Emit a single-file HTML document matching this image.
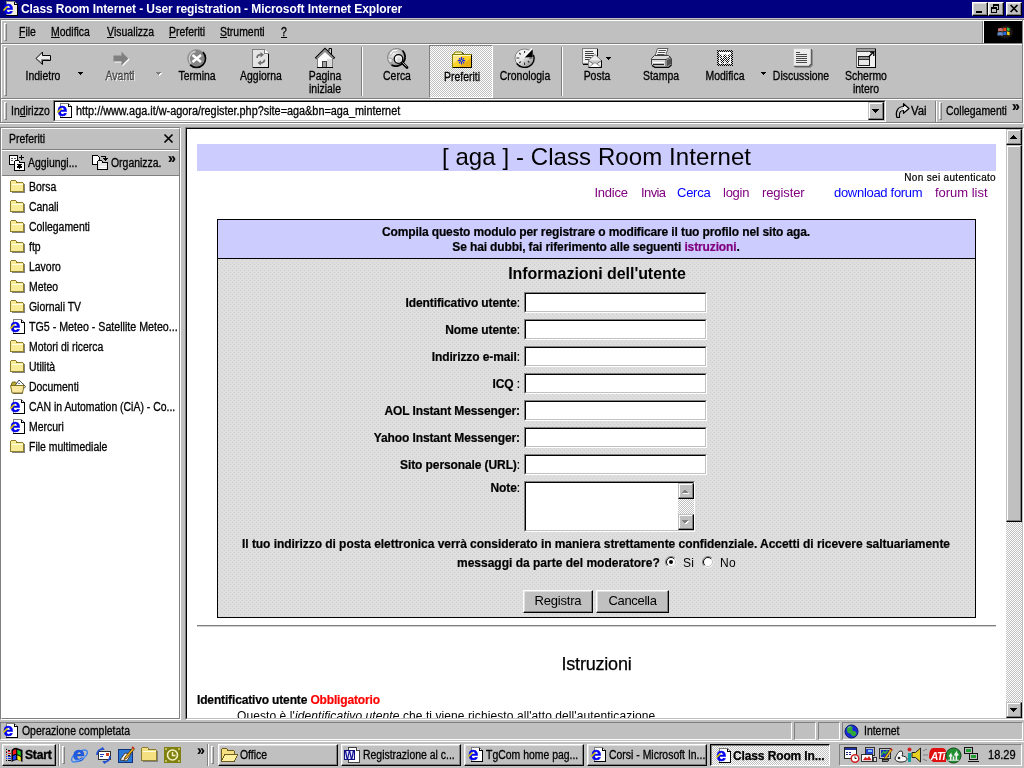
<!DOCTYPE html>
<html lang="it">
<head>
<meta charset="utf-8">
<title>Class Room Internet - User registration - Microsoft Internet Explorer</title>
<style>
*{box-sizing:border-box;margin:0;padding:0}
html,body{width:1024px;height:768px;overflow:hidden;background:#c0c0c0}
body{font-family:"Liberation Sans",sans-serif;font-size:12px;color:#000;position:relative;will-change:transform}
.abs{position:absolute}
svg{position:absolute;overflow:visible}
.px{shape-rendering:crispEdges}
/* UI text (MS Sans Serif look): 12px squeezed horizontally */
.u,.uc{-webkit-text-stroke:.3px #000}
.u{position:absolute;white-space:nowrap;font-size:12px;line-height:14px;transform:scaleX(.87);transform-origin:0 0}
.uc{position:absolute;white-space:nowrap;font-size:12px;line-height:13px;text-align:center;transform:translateX(-50%) scaleX(.87);transform-origin:50% 0}
.ub{position:absolute;white-space:nowrap;font-size:12px;line-height:14px;font-weight:bold;transform-origin:0 0}
u{text-decoration:none;position:relative}
u:after{content:"";position:absolute;left:0;right:0;top:12px;height:1px;background:#000}
.dis{color:#808080;text-shadow:1px 1px 0 #fff}
.hl{position:absolute;height:1px;left:0;width:1024px}
.grip{position:absolute;width:3px;border:1px solid;border-color:#fff #808080 #808080 #fff}
.vsep{position:absolute;width:2px;border-left:1px solid #808080;border-right:1px solid #fff}
.wb{position:absolute;top:2px;width:16px;height:14px;background:#c0c0c0;border:1px solid;border-color:#fff #000 #000 #fff;box-shadow:inset -1px -1px 0 #808080,inset 1px 1px 0 #dfdfdf}
.raised{background:#c0c0c0;border:1px solid;border-color:#fff #000 #000 #fff;box-shadow:inset -1px -1px 0 #808080,inset 1px 1px 0 #dfdfdf}
.sbtn{background:#c0c0c0;border:1px solid;border-color:#c0c0c0 #000 #000 #c0c0c0;box-shadow:inset -1px -1px 0 #808080,inset 1px 1px 0 #fff}
.sunk1{border:1px solid;border-color:#808080 #fff #fff #808080}
.dith{background-image:repeating-conic-gradient(#fff 0 25%,#c0c0c0 0 50%);background-size:2px 2px}
a{text-decoration:none}
.v{color:#800080}.l{color:#0000ff}
#page .p{position:absolute;white-space:nowrap}
#page .b{font-weight:bold;font-size:12px;line-height:14px;-webkit-text-stroke:.2px}
#page .lbl{position:absolute;white-space:nowrap;font-weight:bold;font-size:12px;line-height:14px;right:486px;letter-spacing:-.1px;-webkit-text-stroke:.2px}
#page .inp{position:absolute;left:337px;width:183px;height:21px;background:#fff;border:1px solid;border-color:#808080 #fff #fff #808080}
#page .inp:after{content:"";position:absolute;left:0;top:0;right:0;bottom:0;border:1px solid;border-color:#000 #c0c0c0 #c0c0c0 #000}
#page .nav{position:absolute;top:56px;font-size:13px;line-height:15px;white-space:nowrap;letter-spacing:-.25px}
#page .btn{position:absolute;top:461px;height:23px;background:#c0c0c0;border:1px solid;border-color:#fff #000 #000 #fff;box-shadow:inset -1px -1px 0 #808080,inset 1px 1px 0 #dfdfdf;font-size:13px;text-align:center;line-height:20px}
</style>
</head>
<body>
<!-- ===== TITLE BAR ===== -->
<div class="abs" style="left:0;top:0;width:1024px;height:18px;background:#000080"></div>
<svg style="left:2px;top:1px" width="16" height="16" viewBox="0 0 16 16"><path class="px" d="M4.500 .5h8l3 3v11h-11z" fill="#f4f0e0" stroke="#808080"/><path class="px" d="M12.500 .5v3h3M15.500 3.500v11h-11.500" fill="none" stroke="#000"/><text x="1.300" y="12.600" font-family="Liberation Sans,sans-serif" font-weight="bold" font-size="18" fill="#0000f0" stroke="#0000f0" stroke-width=".5">e</text><path d="M1.500 9.500l3.800-4" stroke="#d8c800" stroke-width="1.800" fill="none"/></svg>
<span class="ub" style="left:21px;top:2px;color:#fff;letter-spacing:-.09px">Class Room Internet - User registration - Microsoft Internet Explorer</span>
<div class="wb" style="left:972px"><svg class="px" style="left:3px;top:8px" width="6" height="2"><rect width="6" height="2" fill="#000"/></svg></div>
<div class="wb" style="left:988px"><svg class="px" style="left:2px;top:1px" width="8" height="9"><path d="M2 0h6v6h-2v-1h1v-3h-4v1h-1zM0 3h6v6h-6zM1 5v3h4v-3z" fill="#000" fill-rule="evenodd"/></svg></div>
<div class="wb" style="left:1006px"><svg style="left:3px;top:2px" width="8" height="7" viewBox="0 0 8 7"><path d="M.6 0l6.800 7M7.400 0l-6.800 7" stroke="#000" stroke-width="1.700" fill="none"/></svg></div>
<!-- ===== REBAR ===== -->
<div class="abs" style="left:0;top:19px;width:1px;height:104px;background:#808080"></div>
<div class="abs" style="left:1px;top:20px;width:1px;height:103px;background:#fff"></div>
<div class="abs" style="left:1022px;top:19px;width:1px;height:104px;background:#808080"></div>
<div class="abs" style="left:1023px;top:19px;width:1px;height:105px;background:#fff"></div>
<div class="hl" style="top:19px;background:#808080"></div><div class="hl" style="top:20px;left:1px;width:1021px;background:#fff"></div>
<!-- menu -->
<div class="grip" style="left:4px;top:23px;height:18px"></div>
<span class="u" style="left:19px;top:25px"><u>F</u>ile</span>
<span class="u" style="left:51px;top:25px"><u>M</u>odifica</span>
<span class="u" style="left:107px;top:25px"><u>V</u>isualizza</span>
<span class="u" style="left:169px;top:25px"><u>P</u>referiti</span>
<span class="u" style="left:220px;top:25px"><u>S</u>trumenti</span>
<span class="u" style="left:281px;top:25px"><u>?</u></span>
<div class="abs" style="left:982px;top:21px;width:1px;height:22px;background:#808080"></div><div class="abs" style="left:983px;top:21px;width:1px;height:22px;background:#fff"></div><div class="abs" style="left:984px;top:21px;width:38px;height:22px;background:#000"></div>
<svg style="left:994px;top:23px" width="20" height="18" viewBox="0 0 20 18"><defs><radialGradient id="gw" cx=".55" cy=".5" r=".5"><stop offset="0" stop-color="#406040" stop-opacity=".55"/><stop offset=".7" stop-color="#503838" stop-opacity=".35"/><stop offset="1" stop-color="#000" stop-opacity="0"/></radialGradient></defs><ellipse cx="10.500" cy="9" rx="9.500" ry="8" fill="url(#gw)"/><path d="M4 5.500q2.500-1 4.800 0v3q-2.300-1-4.800 0z" fill="#e88080" opacity=".85"/><path d="M3.500 9.500q2.700-1 5.300 0v3.200q-2.600-1-5.300 0z" fill="#70a0e8" opacity=".85"/><path d="M9.300 4.800h3v3.200h-3z" fill="#f04818"/><path d="M13 4.500q1.500 .2 2.600 .8v3q-1.100-.6-2.600-.8z" fill="#38c040"/><path d="M9.300 8.800h3v3.200h-3z" fill="#2868e0"/><path d="M13 8.500q1.500 .2 2.600 .8v3.200q-1.100-.6-2.600-.8z" fill="#f8d010"/></svg>
<div class="hl" style="top:43px;left:1px;width:1021px;background:#808080"></div><div class="hl" style="top:44px;left:1px;width:1021px;background:#fff"></div>
<!-- toolbar -->
<div class="grip" style="left:4px;top:47px;height:49px"></div>
<!-- back -->
<svg style="left:33px;top:49px" width="20" height="18" viewBox="0 0 20 18"><path d="M3 9.500l6.500-6.500v3.500h8v5h-8v4z" fill="#ececec" stroke="#000" stroke-linejoin="miter"/><path d="M5 10.500l3.500 3.500v-3.500h8" fill="none" stroke="#808080"/></svg>
<div class="uc" style="left:43px;top:70px">Indietro</div>
<svg class="px" style="left:78px;top:72px" width="5" height="3"><path d="M0 0h5l-2.500 3z" fill="#000"/></svg>
<!-- forward -->
<svg style="left:111px;top:50px" width="20" height="18" viewBox="0 0 20 18"><path d="M18.500 9.500l-7 7v-4h-8v-6h8v-4z" fill="#fff"/><path d="M17.500 8.500l-7 7v-4h-8v-6h8v-4z" fill="#808080"/></svg>
<div class="uc dis" style="left:120px;top:70px">Avanti</div>
<svg class="px" style="left:156px;top:72px" width="6" height="4"><path d="M1 1h5l-2.500 3z" fill="#fff"/><path d="M0 0h5l-2.500 3z" fill="#808080"/></svg>
<!-- stop -->
<svg style="left:187px;top:49px" width="20" height="20" viewBox="0 0 20 20"><circle cx="9.500" cy="9.500" r="9" fill="#858585" stroke="#9c9c9c"/><path d="M15.900 3.100a9 9 0 0 1-12.800 12.800" fill="none" stroke="#000" stroke-width="1.600"/><path d="M4.200 14.500a7.200 7.200 0 0 1 4.300-12" fill="none" stroke="#d4d4d4" stroke-width="1.300"/><path d="M5.500 6l8.500 7M14 6l-8.500 7" stroke="#fff" stroke-width="2.300"/></svg>
<div class="uc" style="left:197px;top:70px">Termina</div>
<!-- refresh -->
<svg style="left:251px;top:48px" width="20" height="22" viewBox="0 0 20 22"><path class="px" d="M1.500 1.500h12l4 4v14h-16z" fill="#e4e4e4" stroke="#808080"/><path class="px" d="M13.500 1.500v4h4" fill="#fff" stroke="#808080"/><path class="px" d="M17.500 5.500v14h-16" fill="none" stroke="#000"/><path d="M6 10c0-2.500 2-3.800 4.500-3.300" fill="none" stroke="#707070" stroke-width="1.700"/><path d="M9.500 4l3.500 2.800l-3.500 2.600z" fill="#707070"/><path d="M13.500 11.500c0 2.500-2 3.800-4.500 3.300" fill="none" stroke="#707070" stroke-width="1.700"/><path d="M10 12.200l-3.500 2.800l3.500 2.600z" fill="#707070"/></svg>
<div class="uc" style="left:261px;top:70px">Aggiorna</div>
<!-- home -->
<svg style="left:314px;top:47px" width="22" height="23" viewBox="0 0 22 23"><path d="M15 4v-2.500h2.500v6" fill="#d0d0d0" stroke="#000"/><path d="M3.500 11.500v9h15v-9l-7.500-7z" fill="#fafafa" stroke="#808080"/><path d="M13 12h5v8.500h-5z" fill="#d8d8d8"/><path d="M1.500 11.500l9.500-9.500l9.500 9.500" fill="none" stroke="#000" stroke-width="2.200"/><path d="M2.300 11.300l8.700-8.700l8.700 8.700" fill="none" stroke="#fff" stroke-width=".9"/><rect class="px" x="8.500" y="14.500" width="4" height="6" fill="#a0a0a0" stroke="#404040"/><path class="px" d="M3 20.500h16" stroke="#000"/></svg>
<div class="uc" style="left:325px;top:70px">Pagina<br>iniziale</div>
<div class="vsep" style="left:361px;top:47px;height:49px"></div>
<!-- search -->
<svg style="left:386px;top:47px" width="24" height="22" viewBox="0 0 24 22"><defs><radialGradient id="gg" cx=".3" cy=".25" r=".9"><stop offset="0" stop-color="#f4f4f4"/><stop offset=".55" stop-color="#b8b8b8"/><stop offset="1" stop-color="#707070"/></radialGradient></defs><circle cx="10.500" cy="10.500" r="9" fill="url(#gg)" stroke="#808080"/><path d="M16.500 3.500a9.200 9.200 0 0 1-11 14.500" fill="none" stroke="#000" stroke-width="1.700"/><path d="M3 7l4-4.500l6-.5l-2 2.500l-4 .5l-2 3.500z" fill="#fff" stroke="#909090" stroke-width=".6"/><path d="M1.500 10.500l5 1.500l-1 4l-2.500-1z" fill="#e8e8e8" stroke="#808080" stroke-width=".6"/><path d="M16 15.500l5 5" stroke="#000" stroke-width="2.800" stroke-linecap="round"/><path d="M16.500 15.500l4 4" stroke="#b0b0b0" stroke-width="1"/><circle cx="12.500" cy="12" r="4.300" fill="#f4f4f4" stroke="#000" stroke-width="1.300"/><circle cx="13.200" cy="12.800" r="2.500" fill="#d8d8d8"/></svg>
<div class="uc" style="left:397px;top:70px">Cerca</div>
<!-- favorites (pressed) -->
<div class="abs sunk1 dith" style="left:429px;top:45px;width:64px;height:53px"></div>
<svg style="left:452px;top:51px" width="20" height="17" viewBox="0 0 20 17"><path d="M1.500 3.500l1.500-2.500h6.500l1.500 2.500" fill="#fff4b0" stroke="#808000"/><path d="M10.500 1.500l1.200 2" stroke="#000"/><rect class="px" x=".5" y="3.500" width="19" height="13" fill="#ffd428" stroke="#808000"/><path d="M1 4h10l-10 9z" fill="#fff" opacity=".45"/><path d="M19 7v9h-12z" fill="#d89000" opacity=".55"/><path class="px" d="M19.500 3.500v13h-19" fill="none" stroke="#000"/><path class="px" d="M1 4.500h18" stroke="#fff8c0"/><path d="M9.500 6v7.500M5.800 9.700h7.400" stroke="#1020f0" stroke-width="1.200"/><path d="M7.500 7.700l.1 .1M11.500 7.700l.1 .1M7.500 11.700l.1 .1M11.500 11.700l.1 .1" stroke="#1020f0" stroke-width="1.500" stroke-linecap="round"/><path d="M8.300 8.500l2.400 2.400M10.700 8.500l-2.400 2.400" stroke="#1020f0" stroke-width="1"/><circle cx="9.500" cy="9.700" r=".8" fill="#f0e020"/></svg>
<div class="uc" style="left:462px;top:71px">Preferiti</div>
<!-- history -->
<svg style="left:514px;top:47px" width="23" height="22" viewBox="0 0 24 22" preserveAspectRatio="none"><defs><linearGradient id="gh" x1="0" y1="0" x2="1" y2="1"><stop offset="0" stop-color="#ffffff"/><stop offset=".45" stop-color="#e8e8e8"/><stop offset="1" stop-color="#808080"/></linearGradient></defs><ellipse cx="11" cy="11" rx="10" ry="9" fill="url(#gh)" stroke="#808080"/><path d="M20.300 8a10 9 0 0 1-17.500 8.500" fill="none" stroke="#000" stroke-width="1.400"/><path d="M11 4v2M5.500 6l1.500 1.500M2.500 11h3M5.500 16l1.500-1.500M11 18v-2.500M16 15.500l-1.500-1.500M19 11h-3" stroke="#303030" stroke-width="1.100"/><path d="M10.500 10.500l9-8.500v8z" fill="#000"/><path d="M10 10.500l9-9" stroke="#fff" stroke-width="1.700"/></svg>
<div class="uc" style="left:525px;top:70px">Cronologia</div>
<div class="vsep" style="left:561px;top:47px;height:49px"></div>
<!-- mail -->
<svg style="left:582px;top:48px" width="30" height="22" viewBox="0 0 30 22"><path class="px" d="M.5 .5h15v15h-15z" fill="#f0f0f0" stroke="#808080"/><path class="px" d="M15.500 .5v15.500h-15" fill="none" stroke="#000"/><path class="px" d="M3 3h8M3 5h9M3 7h9M3 9h6M3 11h4" stroke="#404040"/><path d="M6.500 12.500l6.500-6l6.500 6v7h-13z" fill="#ececec" stroke="#808080"/><path d="M6.500 12.500l6.500 4.500l6.500-4.500" fill="#c8c8c8" stroke="#707070"/><path d="M6.500 19.500l6.500-5l6.500 5" fill="#fff" stroke="#909090"/><path d="M19.500 12.500v7h-13" fill="none" stroke="#000"/><path class="px" d="M24 9h5l-2.500 3z" fill="#000"/></svg>
<div class="uc" style="left:597px;top:70px">Posta</div>
<!-- print -->
<svg style="left:650px;top:47px" width="24" height="22" viewBox="0 0 24 22"><path d="M7.500 1.500h10.500l-3 9h-10.500z" fill="#fff" stroke="#606060"/><path d="M8.500 3.500h7.500M7.800 5.500h7.500M7.100 7.500h7.500" stroke="#505050" stroke-width="1.100"/><path d="M1.500 11.500l3-3h14l3 3v6l-3 2.500h-14l-3-2.500z" fill="#dcdcdc" stroke="#404040"/><path d="M1.500 12.500h14.500l5-2.500M16 12.500v7" fill="none" stroke="#404040"/><path d="M17 13l4-2v6l-4 2.500z" fill="#505050"/><path d="M3 15.500h11" stroke="#fff"/><path d="M3 17.500h11" stroke="#202020" stroke-width="1.300"/><path d="M2 18.500l3 2h13.500l3-2.500" fill="none" stroke="#000" stroke-width="1.200"/></svg>
<div class="uc" style="left:661px;top:70px">Stampa</div>
<!-- edit (Word) -->
<svg style="left:717px;top:50px" width="16" height="16" viewBox="0 0 16 16"><defs><pattern id="ck" width="2" height="2" patternUnits="userSpaceOnUse"><rect class="px" x="0" y="0" width="1" height="1" fill="#000"/><rect class="px" x="1" y="1" width="1" height="1" fill="#000"/></pattern></defs><rect class="px" x="0" y="0" width="16" height="16" fill="#c0c0c0"/><rect class="px" x="0" y="0" width="16" height="16" fill="url(#ck)"/><rect class="px" x="2" y="2" width="12" height="12" fill="#fff"/><text x="8" y="13" text-anchor="middle" font-family="Liberation Sans,sans-serif" font-weight="bold" font-size="11.500" fill="url(#ck)" stroke="url(#ck)" stroke-width=".8">W</text></svg>
<div class="uc" style="left:725px;top:70px">Modifica</div>
<svg class="px" style="left:761px;top:72px" width="5" height="3"><path d="M0 0h5l-2.500 3z" fill="#000"/></svg>
<!-- discuss -->
<svg style="left:792px;top:47px" width="22" height="22" viewBox="0 0 22 22"><path class="px" d="M1.500 1.500h17v15l-2 2h-15z" fill="#ececec" stroke="#c8c8c8"/><path class="px" d="M19.500 2v15l-2.500 2.500h-15" fill="none" stroke="#606060" stroke-width="1"/><path class="px" d="M20.500 3v15l-2.500 2.500h-15" fill="none" stroke="#909090"/><path class="px" d="M4 5h4M4 7h11M4 9h11M4 11h11M4 13h11M4 15h11" stroke="#484848"/></svg>
<div class="uc" style="left:801px;top:70px">Discussione</div>
<!-- fullscreen -->
<svg style="left:856px;top:48px" width="21" height="21" viewBox="0 0 21 21"><rect class="px" x=".5" y=".5" width="19" height="19" fill="#f0f0f0" stroke="#606060"/><path class="px" d="M1 2h18" stroke="#a0a0a0" stroke-width="2"/><path class="px" d="M1 3.500h18" stroke="#404040"/><rect class="px" x="2.500" y="8.500" width="11" height="9" fill="#e8e8e8" stroke="#202020"/><path class="px" d="M3 10h10" stroke="#909090" stroke-width="2"/><path class="px" d="M3 11.500h10" stroke="#303030"/><path d="M12.500 9l5-5M14 4.200h3.800v3.800" fill="none" stroke="#000" stroke-width="1.300"/><path class="px" d="M19.500 .5v19h-19" fill="none" stroke="#000"/></svg>
<div class="uc" style="left:866px;top:70px">Schermo<br>intero</div>
<div class="hl" style="top:98px;left:1px;width:1021px;background:#808080"></div><div class="hl" style="top:99px;left:1px;width:1021px;background:#fff"></div>
<!-- address bar -->
<div class="grip" style="left:4px;top:102px;height:18px"></div>
<span class="u" style="left:11px;top:104px">In<u>d</u>irizzo</span>
<div class="abs" style="left:53px;top:100px;width:833px;height:22px;background:#fff;border:1px solid;border-color:#808080 #fff #fff #808080"></div>
<div class="abs" style="left:54px;top:101px;width:831px;height:20px;border:1px solid;border-color:#000 #c0c0c0 #c0c0c0 #000"></div>
<svg style="left:56px;top:103px" width="16" height="16" viewBox="0 0 16 16"><path class="px" d="M4.500 .5h8l3 3v11h-11z" fill="#fff" stroke="#808080"/><path class="px" d="M12.500 .5v3h3M15.500 3.500v11h-11.500" fill="none" stroke="#000"/><text x="1.300" y="12.600" font-family="Liberation Sans,sans-serif" font-weight="bold" font-size="18" fill="#0000f0" stroke="#0000f0" stroke-width=".5">e</text><path d="M1.500 9.500l3.800-4" stroke="#d8c800" stroke-width="1.800" fill="none"/></svg>
<span class="u" style="left:76px;top:104px;transform:scaleX(.905)">http://www.aga.it/w-agora/register.php?site=aga&amp;bn=aga_minternet</span>
<div class="abs sbtn" style="left:868px;top:102px;width:16px;height:18px"></div>
<svg class="px" style="left:872px;top:109px" width="7" height="4"><path d="M0 0h7l-3.500 4z" fill="#000"/></svg>
<svg style="left:895px;top:103px" width="15" height="16" viewBox="0 0 15 16"><path d="M8.500 .7l5.500 4.800l-5.500 4.800v-2.800c-3.200 0-4.700 2-4 6.800h-2.700c-1.600-5.500 1-10.800 6.700-10.800z" fill="#f0f0f0" stroke="#000" stroke-width="1.200" stroke-linejoin="round"/><path d="M3 13c-.8-4 1-7 5-7.600" fill="none" stroke="#a0a0a0"/></svg>
<span class="u" style="left:911px;top:104px;transform:scaleX(.95)">Vai</span>
<div class="vsep" style="left:935px;top:101px;height:21px"></div>
<div class="grip" style="left:939px;top:102px;height:18px"></div>
<span class="u" style="left:946px;top:104px">Collegamenti</span>
<span class="ub" style="left:1012px;top:99px;font-size:14px;-webkit-text-stroke:.2px #000">»</span>
<div class="hl" style="top:122px;left:1px;width:1021px;background:#808080"></div><div class="hl" style="top:123px;background:#fff"></div>
<!-- ===== FAVORITES PANE ===== -->
<div class="abs" style="left:0;top:127px;width:181px;height:593px;border:1px solid;border-color:#808080 #fff #fff #808080"></div>
<div class="abs" style="left:1px;top:128px;width:179px;height:591px;border:1px solid;border-color:#fff #808080 #808080 #fff"></div>
<span class="u" style="left:9px;top:132px">Preferiti</span>
<svg style="left:164px;top:134px" width="9" height="9" viewBox="0 0 9 9"><path d="M.5 .5l8 8M8.500 .5l-8 8" stroke="#000" stroke-width="1.700"/></svg>
<div class="abs" style="left:2px;top:149px;width:177px;height:1px;background:#808080"></div><div class="abs" style="left:2px;top:150px;width:177px;height:1px;background:#fff"></div>
<!-- add icon -->
<svg class="px" style="left:9px;top:154px" width="17" height="17" viewBox="0 0 17 17"><rect x=".5" y="1.500" width="8" height="9" fill="#fff" stroke="#000"/><path d="M2 4h2M2 6h2M5 4h2" stroke="#606060"/><path d="M10 3.500h5M12.500 1v5" stroke="#000"/><path d="M5.500 8.500v-1l1-1h3l1 1v1h5v8h-10z" fill="#fff" stroke="#000"/><path d="M10.500 9.500v5M8 12h5M8.500 10l4 4M12.500 10l-4 4" stroke="#000"/></svg>
<span class="u" style="left:28px;top:156px">Aggiungi...</span>
<!-- organize icon -->
<svg class="px" style="left:92px;top:154px" width="17" height="17" viewBox="0 0 17 17"><path d="M.5 1.500h5l2 2v7h-7z" fill="#fff" stroke="#000"/><path d="M9 2.500h4.500v3M11.500 4l2 2l2-2" fill="none" stroke="#000"/><path d="M5.500 8.500v-1l1-1h3l1 1v1h5v7h-10z" fill="#e8e8e8" stroke="#000"/><path d="M7 12h7M7 14h7" stroke="#fff"/></svg>
<span class="u" style="left:111px;top:156px">Organizza.</span>
<span class="ub" style="left:168px;top:151px;font-size:14px;-webkit-text-stroke:.2px #000">»</span>
<div class="abs" style="left:2px;top:175px;width:177px;height:1px;background:#808080"></div>
<div class="abs" style="left:2px;top:176px;width:177px;height:542px;background:#fff"></div>
<svg class="px" style="left:10px;top:180px" width="16" height="14" viewBox="0 0 16 14"><path d="M.5 3.500v-2l1-1h4l1 1v1h6l1 1v8h-13z" fill="#f8ec98" stroke="#90802c"/><path d="M1.500 4.500h11" stroke="#fffde0"/><path d="M14.500 4v8.500h-13" fill="none" stroke="#303030" stroke-opacity=".6"/></svg>
<span class="u" style="left:29px;top:180px">Borsa</span>
<svg class="px" style="left:10px;top:200px" width="16" height="14" viewBox="0 0 16 14"><path d="M.5 3.500v-2l1-1h4l1 1v1h6l1 1v8h-13z" fill="#f8ec98" stroke="#90802c"/><path d="M1.500 4.500h11" stroke="#fffde0"/><path d="M14.500 4v8.500h-13" fill="none" stroke="#303030" stroke-opacity=".6"/></svg>
<span class="u" style="left:29px;top:200px">Canali</span>
<svg class="px" style="left:10px;top:220px" width="16" height="14" viewBox="0 0 16 14"><path d="M.5 3.500v-2l1-1h4l1 1v1h6l1 1v8h-13z" fill="#f8ec98" stroke="#90802c"/><path d="M1.500 4.500h11" stroke="#fffde0"/><path d="M14.500 4v8.500h-13" fill="none" stroke="#303030" stroke-opacity=".6"/></svg>
<span class="u" style="left:29px;top:220px">Collegamenti</span>
<svg class="px" style="left:10px;top:240px" width="16" height="14" viewBox="0 0 16 14"><path d="M.5 3.500v-2l1-1h4l1 1v1h6l1 1v8h-13z" fill="#f8ec98" stroke="#90802c"/><path d="M1.500 4.500h11" stroke="#fffde0"/><path d="M14.500 4v8.500h-13" fill="none" stroke="#303030" stroke-opacity=".6"/></svg>
<span class="u" style="left:29px;top:240px">ftp</span>
<svg class="px" style="left:10px;top:260px" width="16" height="14" viewBox="0 0 16 14"><path d="M.5 3.500v-2l1-1h4l1 1v1h6l1 1v8h-13z" fill="#f8ec98" stroke="#90802c"/><path d="M1.500 4.500h11" stroke="#fffde0"/><path d="M14.500 4v8.500h-13" fill="none" stroke="#303030" stroke-opacity=".6"/></svg>
<span class="u" style="left:29px;top:260px">Lavoro</span>
<svg class="px" style="left:10px;top:280px" width="16" height="14" viewBox="0 0 16 14"><path d="M.5 3.500v-2l1-1h4l1 1v1h6l1 1v8h-13z" fill="#f8ec98" stroke="#90802c"/><path d="M1.500 4.500h11" stroke="#fffde0"/><path d="M14.500 4v8.500h-13" fill="none" stroke="#303030" stroke-opacity=".6"/></svg>
<span class="u" style="left:29px;top:280px">Meteo</span>
<svg class="px" style="left:10px;top:300px" width="16" height="14" viewBox="0 0 16 14"><path d="M.5 3.500v-2l1-1h4l1 1v1h6l1 1v8h-13z" fill="#f8ec98" stroke="#90802c"/><path d="M1.500 4.500h11" stroke="#fffde0"/><path d="M14.500 4v8.500h-13" fill="none" stroke="#303030" stroke-opacity=".6"/></svg>
<span class="u" style="left:29px;top:300px">Giornali TV</span>
<svg style="left:9px;top:319px" width="16" height="16" viewBox="0 0 16 16"><path class="px" d="M4.500 .5h8l3 3v11h-11z" fill="#fff" stroke="#808080"/><path class="px" d="M12.500 .5v3h3M15.500 3.500v11h-11.500" fill="none" stroke="#000"/><text x="1.300" y="12.600" font-family="Liberation Sans,sans-serif" font-weight="bold" font-size="18" fill="#0000f0" stroke="#0000f0" stroke-width=".5">e</text><path d="M1.500 9.500l3.800-4" stroke="#d8c800" stroke-width="1.800" fill="none"/></svg>
<span class="u" style="left:29px;top:320px;transform:scaleX(.888)">TG5 - Meteo - Satellite Meteo...</span>
<svg class="px" style="left:10px;top:340px" width="16" height="14" viewBox="0 0 16 14"><path d="M.5 3.500v-2l1-1h4l1 1v1h6l1 1v8h-13z" fill="#f8ec98" stroke="#90802c"/><path d="M1.500 4.500h11" stroke="#fffde0"/><path d="M14.500 4v8.500h-13" fill="none" stroke="#303030" stroke-opacity=".6"/></svg>
<span class="u" style="left:29px;top:340px">Motori di ricerca</span>
<svg class="px" style="left:10px;top:360px" width="16" height="14" viewBox="0 0 16 14"><path d="M.5 3.500v-2l1-1h4l1 1v1h6l1 1v8h-13z" fill="#f8ec98" stroke="#90802c"/><path d="M1.500 4.500h11" stroke="#fffde0"/><path d="M14.500 4v8.500h-13" fill="none" stroke="#303030" stroke-opacity=".6"/></svg>
<span class="u" style="left:29px;top:360px">Utilità</span>
<svg style="left:10px;top:379px" width="16" height="15" viewBox="0 0 16 15"><path d="M1.500 5l1-2h3l1 1.500h6.500v4h-11.500z" fill="#b8a838" stroke="#786818"/><path d="M4 8l5-7l6.500 6.500l-1.500 2z" fill="#fff" stroke="#404040" stroke-width=".9"/><path d="M8 5l1-1.200l1.200 1.200z" fill="#3050d0"/><path d="M.5 6.500h13.500l-1.500 7.500h-10.500z" fill="#fbe9a0" stroke="#807020"/><path d="M3 14.500h10" stroke="#403810" stroke-opacity=".6"/></svg>
<span class="u" style="left:29px;top:380px">Documenti</span>
<svg style="left:9px;top:399px" width="16" height="16" viewBox="0 0 16 16"><path class="px" d="M4.500 .5h8l3 3v11h-11z" fill="#fff" stroke="#808080"/><path class="px" d="M12.500 .5v3h3M15.500 3.500v11h-11.500" fill="none" stroke="#000"/><text x="1.300" y="12.600" font-family="Liberation Sans,sans-serif" font-weight="bold" font-size="18" fill="#0000f0" stroke="#0000f0" stroke-width=".5">e</text><path d="M1.500 9.500l3.800-4" stroke="#d8c800" stroke-width="1.800" fill="none"/></svg>
<span class="u" style="left:29px;top:400px">CAN in Automation (CiA) - Co...</span>
<svg style="left:9px;top:419px" width="16" height="16" viewBox="0 0 16 16"><path class="px" d="M4.500 .5h8l3 3v11h-11z" fill="#fff" stroke="#808080"/><path class="px" d="M12.500 .5v3h3M15.500 3.500v11h-11.500" fill="none" stroke="#000"/><text x="1.300" y="12.600" font-family="Liberation Sans,sans-serif" font-weight="bold" font-size="18" fill="#0000f0" stroke="#0000f0" stroke-width=".5">e</text><path d="M1.500 9.500l3.800-4" stroke="#d8c800" stroke-width="1.800" fill="none"/></svg>
<span class="u" style="left:29px;top:420px">Mercuri</span>
<svg class="px" style="left:10px;top:440px" width="16" height="14" viewBox="0 0 16 14"><path d="M.5 3.500v-2l1-1h4l1 1v1h6l1 1v8h-13z" fill="#f8ec98" stroke="#90802c"/><path d="M1.500 4.500h11" stroke="#fffde0"/><path d="M14.500 4v8.500h-13" fill="none" stroke="#303030" stroke-opacity=".6"/></svg>
<span class="u" style="left:29px;top:440px">File multimediale</span>
<!-- ===== CONTENT PANE ===== -->
<div class="abs" style="left:185px;top:127px;width:839px;height:593px;border:1px solid;border-color:#808080 #fff #fff #808080"></div>
<div class="abs" style="left:186px;top:128px;width:837px;height:591px;border:1px solid;border-color:#000 #c0c0c0 #c0c0c0 #000;background:#fff"></div>
<div class="abs" id="page" style="left:187px;top:129px;width:819px;height:589px;background:#fff;overflow:hidden">
<div class="abs" style="left:10px;top:15px;width:799px;height:27px;background:#ccccff"></div>
<div class="p" style="left:10px;width:799px;top:14px;text-align:center;font-size:24px;line-height:28px;letter-spacing:.08px">[ aga ] - Class Room Internet</div>
<div class="p" style="right:10px;top:43px;font-size:10px;line-height:12px;letter-spacing:.32px;-webkit-text-stroke:.2px #000">Non sei autenticato</div>
<a class="nav v" style="left:407.500px">Indice</a>
<a class="nav v" style="left:454px;letter-spacing:-.6px">Invia</a>
<a class="nav l" style="left:490px">Cerca</a>
<a class="nav v" style="left:536px">login</a>
<a class="nav v" style="left:575px;letter-spacing:-.1px">register</a>
<a class="nav l" style="left:647px;letter-spacing:-.3px">download forum</a>
<a class="nav v" style="left:748px;letter-spacing:-.02px">forum list</a>
<!-- form table -->
<div class="abs" style="left:30px;top:90px;width:759px;height:399px;border:1px solid #000;background:#dedede"></div>
<svg class="px" style="left:31px;top:130px" width="757" height="358"><defs><pattern id="dp" width="4" height="4" patternUnits="userSpaceOnUse"><rect x="0" y="1" width="1" height="1" fill="#cecece"/><rect x="2" y="3" width="1" height="1" fill="#cecece"/></pattern></defs><rect width="757" height="358" fill="url(#dp)"/></svg>
<div class="abs" style="left:31px;top:91px;width:757px;height:38px;background:#ccccff"></div>
<div class="abs" style="left:31px;top:129px;width:757px;height:1px;background:#000"></div>
<div class="p b" style="left:30px;width:758px;top:96px;text-align:center;letter-spacing:-.12px;line-height:15px">Compila questo modulo per registrare o modificare il tuo profilo nel sito aga.<br>Se hai dubbi, fai riferimento alle seguenti <a class="v">istruzioni</a>.</div>
<div class="p" style="left:31px;width:758px;top:136px;text-align:center;font-weight:bold;font-size:16px;line-height:18px;letter-spacing:-.05px">Informazioni dell'utente</div>
<div class="lbl" style="top:167px">Identificativo utente<span style="font-weight:normal">:</span></div><div class="inp" style="top:163px"></div>
<div class="lbl" style="top:194px">Nome utente<span style="font-weight:normal">:</span></div><div class="inp" style="top:190px"></div>
<div class="lbl" style="top:221px">Indirizzo e-mail<span style="font-weight:normal">:</span></div><div class="inp" style="top:217px"></div>
<div class="lbl" style="top:248px">ICQ <span style="font-weight:normal">:</span></div><div class="inp" style="top:244px"></div>
<div class="lbl" style="top:275px">AOL Instant Messenger:</div><div class="inp" style="top:271px"></div>
<div class="lbl" style="top:302px">Yahoo Instant Messenger:</div><div class="inp" style="top:298px"></div>
<div class="lbl" style="top:329px">Sito personale (URL)<span style="font-weight:normal">:</span></div><div class="inp" style="top:325px"></div>
<div class="lbl" style="top:352px;right:486px">Note<span style="font-weight:normal">:</span></div>
<div class="inp" style="top:352px;width:171px;height:51px"></div>
<div class="abs dith" style="left:491px;top:354px;width:16px;height:47px"></div>
<div class="abs sbtn" style="left:491px;top:354px;width:16px;height:16px"></div>
<svg class="px" style="left:494px;top:360px" width="8" height="5"><path d="M1 5h7l-3.500-3.500z" fill="#fff"/><path d="M0 4h7l-3.500-3.500z" fill="#808080"/></svg>
<div class="abs sbtn" style="left:491px;top:385px;width:16px;height:16px"></div>
<svg class="px" style="left:494px;top:391px" width="8" height="5"><path d="M1 1h7l-3.500 3.500z" fill="#fff"/><path d="M0 0h7l-3.500 3.500z" fill="#808080"/></svg>
<div class="p b" style="left:30px;width:758px;top:408px;text-align:center;letter-spacing:-.045px">Il tuo indirizzo di posta elettronica verrà considerato in maniera strettamente confidenziale. Accetti di ricevere saltuariamente</div>
<div class="p b" style="left:270px;top:427px">messaggi da parte del moderatore?</div>
<svg style="left:478px;top:427px" width="12" height="12" viewBox="0 0 12 12"><circle cx="6" cy="6" r="5.500" fill="#fff"/><path d="M2.100 9.900a5.500 5.500 0 0 1 7.800-7.800" fill="none" stroke="#808080"/><path d="M2.800 9.200a4.500 4.500 0 0 1 6.400-6.400" fill="none" stroke="#000"/><path d="M9.200 2.800a4.500 4.500 0 0 1-6.400 6.400" fill="none" stroke="#c0c0c0"/><circle cx="6" cy="6" r="2" fill="#000"/></svg>
<div class="p" style="left:496px;top:427px;font-size:12px;line-height:14px;letter-spacing:.3px">Si</div>
<svg style="left:515px;top:427px" width="12" height="12" viewBox="0 0 12 12"><circle cx="6" cy="6" r="5.500" fill="#fff"/><path d="M2.100 9.900a5.500 5.500 0 0 1 7.800-7.800" fill="none" stroke="#808080"/><path d="M2.800 9.200a4.500 4.500 0 0 1 6.400-6.400" fill="none" stroke="#000"/><path d="M9.200 2.800a4.500 4.500 0 0 1-6.400 6.400" fill="none" stroke="#c0c0c0"/></svg>
<div class="p" style="left:533px;top:427px;font-size:12px;line-height:14px;letter-spacing:.3px">No</div>
<div class="btn" style="left:336px;width:70px;letter-spacing:-.2px">Registra</div>
<div class="btn" style="left:409px;width:73px;letter-spacing:-.3px">Cancella</div>
<!-- hr -->
<div class="abs" style="left:10px;top:496px;width:799px;height:2px;border-top:1px solid #808080;border-bottom:1px solid #d0d0d0"></div>
<div class="p" style="left:10px;width:799px;top:524px;text-align:center;font-size:18px;line-height:22px;letter-spacing:-.2px;-webkit-text-stroke:.25px">Istruzioni</div>
<div class="p b" style="left:10px;top:564px;letter-spacing:-.15px">Identificativo utente <span style="color:#ff0000">Obbligatorio</span></div>
<div class="p" style="left:50px;top:580px;font-size:12px;line-height:14px;letter-spacing:.085px">Questo è l'<i>identificativo utente</i> che ti viene richiesto all'atto dell'autenticazione</div>
</div>
<!-- main scrollbar -->
<div class="abs dith" style="left:1006px;top:129px;width:16px;height:589px"></div>
<div class="abs sbtn" style="left:1006px;top:129px;width:16px;height:16px"></div>
<svg class="px" style="left:1010px;top:135px" width="7" height="4"><path d="M0 4h7l-3.500-4z" fill="#000"/></svg>
<div class="abs sbtn" style="left:1006px;top:145px;width:16px;height:377px"></div>
<div class="abs sbtn" style="left:1006px;top:702px;width:16px;height:16px"></div>
<svg class="px" style="left:1010px;top:708px" width="7" height="4"><path d="M0 0h7l-3.500 4z" fill="#000"/></svg>
<!-- ===== STATUS BAR ===== -->
<div class="abs sunk1" style="left:0;top:722px;width:792px;height:18px"></div>
<div class="abs sunk1" style="left:794px;top:722px;width:22px;height:18px"></div>
<div class="abs sunk1" style="left:818px;top:722px;width:22px;height:18px"></div>
<div class="abs sunk1" style="left:842px;top:722px;width:181px;height:18px"></div>
<svg style="left:2px;top:723px" width="16" height="16" viewBox="0 0 16 16"><path class="px" d="M4.500 .5h8l3 3v11h-11z" fill="#fff" stroke="#808080"/><path class="px" d="M12.500 .5v3h3M15.500 3.500v11h-11.500" fill="none" stroke="#000"/><text x="1.300" y="12.600" font-family="Liberation Sans,sans-serif" font-weight="bold" font-size="18" fill="#0000f0" stroke="#0000f0" stroke-width=".5">e</text><path d="M1.500 9.500l3.800-4" stroke="#d8c800" stroke-width="1.800" fill="none"/></svg>
<span class="u" style="left:22px;top:724px">Operazione completata</span>
<svg style="left:844px;top:724px" width="15" height="15" viewBox="0 0 16 16"><circle cx="8" cy="8" r="7" fill="#1828d8" stroke="#101870"/><path d="M3 5c2-3 5-3 6-2s-1 3 0 4s3 0 4 2s-1 4-3 4s-2-3-4-3s-3-2-3-5z" fill="#30a838"/><path d="M4 4c1-1 2-1 3-1" stroke="#a0e0a0" fill="none"/></svg>
<span class="u" style="left:864px;top:724px">Internet</span>
<!-- ===== TASKBAR ===== -->
<div class="hl" style="top:741px;background:#fff"></div>
<div class="abs raised" style="left:2px;top:744px;width:54px;height:22px"></div>
<svg style="left:5px;top:747px" width="18" height="16" viewBox="0 0 18 16"><path d="M6.500 3q3-3 5.500-2q2.500 1 5.500 2v12q-3-2-5.500-2t-5.500 2z" fill="#000"/><path d="M7.800 3.800q1.800-1.800 3.400-1.300v4.500q-1.600-.5-3.400 1.300z" fill="#f01818"/><path d="M12.300 2.800q1.800 .6 3.500 1.600v4.500q-1.700-1-3.500-1.600z" fill="#18c828"/><path d="M7.800 9.300q1.800-1.800 3.400-1.300v4.500q-1.600-.5-3.400 1.300z" fill="#1838f0"/><path d="M12.300 8.300q1.800 .6 3.500 1.600v4.300q-1.700-1-3.500-1.600z" fill="#f0e818"/><path class="px" d="M1 4h1M3 4h2M1 7h1M3 6h3" stroke="#f01818"/><path class="px" d="M1 9h1M3 9h3M1 11h1M3 11h3" stroke="#1838f0"/><path class="px" d="M1 2h1M1 5h1M1 13h1M3 13h3M3 3h2M3 8h2" stroke="#000"/></svg>
<span class="ub" style="left:25px;top:748px;letter-spacing:-.15px;-webkit-text-stroke:.35px #000">Start</span>
<div class="vsep" style="left:58px;top:744px;height:22px"></div>
<div class="grip" style="left:62px;top:746px;height:18px"></div>
<!-- quick launch: IE -->
<svg style="left:71px;top:746px" width="18" height="18" viewBox="0 0 18 18"><ellipse cx="8.500" cy="10" rx="9" ry="4.200" transform="rotate(-32 8.500 10)" fill="none" stroke="#3c80f0" stroke-width="1.400"/><text x="2" y="15" font-family="Liberation Sans,sans-serif" font-weight="bold" font-size="21" fill="#2060e8" stroke="#1848c8" stroke-width=".7">e</text><path d="M3 13.500c3 2 8 .5 11.500-3.500" stroke="#80b8ff" stroke-width="1" fill="none"/></svg>
<!-- outlook express -->
<svg style="left:95px;top:747px" width="17" height="16" viewBox="0 0 17 16"><rect class="px" x="3.500" y="4.500" width="12" height="8" fill="#fff" stroke="#303030"/><path class="px" d="M5 7h4M5 9h3" stroke="#2040c0"/><rect class="px" x="11" y="6" width="3" height="3" fill="#d04020"/><path d="M2 8c0-4 3-6 6-6l-1-1.500M15 9c0 4-3 6-6 6l1 1.500" fill="none" stroke="#2050d0" stroke-width="1.800"/></svg>
<!-- pen / desktop -->
<svg style="left:117px;top:746px" width="18" height="18" viewBox="0 0 18 18"><rect class="px" x="1.500" y="3.500" width="14" height="13" fill="#2878d8" stroke="#103080"/><path d="M3 14l5-7l6 1l-4 7z" fill="#f0f0f0" stroke="#404040"/><path d="M8 11l8-9.500l1.500 1.500l-8 9.500l-2.500 1z" fill="#e8b020" stroke="#503000" stroke-width=".8"/><path d="M15 .8l2 2" stroke="#d02020" stroke-width="1.500"/></svg>
<!-- folder -->
<svg class="px" style="left:141px;top:747px" width="17" height="15" viewBox="0 0 17 15"><path d="M.5 3.500v-2l1-1h5l1 1v1h7l1 1v10h-15z" fill="#f4e080" stroke="#8c7c30"/><path d="M1.500 4.500h13" stroke="#fffce0"/><path d="M16.500 4v10.500h-15" fill="none" stroke="#404040" stroke-opacity=".5"/></svg>
<!-- scheduler -->
<svg style="left:164px;top:747px" width="17" height="16" viewBox="0 0 17 16"><rect class="px" width="17" height="16" fill="#808010"/><circle cx="8.500" cy="8" r="5" fill="#808010" stroke="#f0f0c0" stroke-width="1.600"/><path d="M8.500 5v3.500h3" fill="none" stroke="#f0f0c0" stroke-width="1.400"/><path class="px" d="M1 1h2v2h-2zM14 1h2v2h-2zM1 13h2v2h-2zM14 13h2v2h-2z" fill="#c0c060"/></svg>
<span class="ub" style="left:197px;top:743px;font-size:14px;-webkit-text-stroke:.15px #000">»</span>
<div class="vsep" style="left:207px;top:744px;height:22px"></div>
<div class="grip" style="left:211px;top:746px;height:18px"></div>
<div class="abs raised" style="left:218px;top:744px;width:120px;height:22px"></div>
<svg class="px" style="left:221px;top:748px" width="17" height="14" viewBox="0 0 17 14"><path d="M.5 3.500v-2l1-1h4l1 1v1h6l1 1v9h-13z" fill="#f4e080" stroke="#6c5c20"/><path d="M3.500 6.500h13l-3 7h-13z" fill="#fff0a0" stroke="#6c5c20"/></svg>
<span class="u" style="left:240px;top:748px">Office</span>
<div class="abs raised" style="left:341px;top:744px;width:120px;height:22px"></div>
<svg style="left:344px;top:747px" width="16" height="16" viewBox="0 0 16 16"><path class="px" d="M4.500 .5h8l3 3v12h-11z" fill="#fff" stroke="#404040"/><path class="px" d="M12.500 .5v3h3" fill="#d8d8d8" stroke="#404040"/><rect class="px" x=".5" y="3.500" width="10" height="9" fill="#e8e8ff" stroke="#101080"/><text x="5.500" y="11.500" text-anchor="middle" font-family="Liberation Sans,sans-serif" font-weight="bold" font-size="10" fill="#101090">W</text></svg>
<span class="u" style="left:363px;top:748px">Registrazione al c...</span>
<div class="abs raised" style="left:464px;top:744px;width:120px;height:22px"></div>
<svg style="left:467px;top:747px" width="16" height="16" viewBox="0 0 16 16"><path class="px" d="M4.500 .5h8l3 3v11h-11z" fill="#fff" stroke="#808080"/><path class="px" d="M12.500 .5v3h3M15.500 3.500v11h-11.500" fill="none" stroke="#000"/><text x="1.300" y="12.600" font-family="Liberation Sans,sans-serif" font-weight="bold" font-size="18" fill="#0000f0" stroke="#0000f0" stroke-width=".5">e</text><path d="M1.500 9.500l3.800-4" stroke="#d8c800" stroke-width="1.800" fill="none"/></svg>
<span class="u" style="left:486px;top:748px">TgCom home pag...</span>
<div class="abs raised" style="left:587px;top:744px;width:120px;height:22px"></div>
<svg style="left:590px;top:747px" width="16" height="16" viewBox="0 0 16 16"><path class="px" d="M4.500 .5h8l3 3v11h-11z" fill="#fff" stroke="#808080"/><path class="px" d="M12.500 .5v3h3M15.500 3.500v11h-11.500" fill="none" stroke="#000"/><text x="1.300" y="12.600" font-family="Liberation Sans,sans-serif" font-weight="bold" font-size="18" fill="#0000f0" stroke="#0000f0" stroke-width=".5">e</text><path d="M1.500 9.500l3.800-4" stroke="#d8c800" stroke-width="1.800" fill="none"/></svg>
<span class="u" style="left:609px;top:748px">Corsi - Microsoft In...</span>
<div class="abs dith" style="left:710px;top:744px;width:120px;height:22px;border:1px solid;border-color:#000 #fff #fff #000;box-shadow:inset 1px 1px 0 #808080"></div>
<svg style="left:715px;top:748px" width="16" height="16" viewBox="0 0 16 16"><path class="px" d="M4.500 .5h8l3 3v11h-11z" fill="#fff" stroke="#808080"/><path class="px" d="M12.500 .5v3h3M15.500 3.500v11h-11.500" fill="none" stroke="#000"/><text x="1.300" y="12.600" font-family="Liberation Sans,sans-serif" font-weight="bold" font-size="18" fill="#0000f0" stroke="#0000f0" stroke-width=".5">e</text><path d="M1.500 9.500l3.800-4" stroke="#d8c800" stroke-width="1.800" fill="none"/></svg>
<span class="ub" style="left:733px;top:749px;letter-spacing:-.12px;-webkit-text-stroke:.25px #000">Class Room In...</span>
<div class="abs sunk1" style="left:839px;top:744px;width:183px;height:22px"></div>
<span class="u" style="left:988px;top:748px;transform:scaleX(.92)">18.29</span>
<!-- tray icons -->
<svg style="left:844px;top:747px" width="16" height="16" viewBox="0 0 16 16"><rect class="px" x=".5" y=".5" width="12" height="11" fill="#fff" stroke="#202020"/><path class="px" d="M1 2h11" stroke="#2030a0" stroke-width="2"/><path class="px" d="M2 5h2M5 5h2M2 7h2M5 7h2" stroke="#202080"/><circle cx="11" cy="11.500" r="3.800" fill="#fff" stroke="#d02020" stroke-width="1.500"/><path d="M11 9.500v2h1.500" stroke="#202020" fill="none"/></svg>
<svg style="left:861px;top:747px" width="16" height="16" viewBox="0 0 18 18"><rect class="px" x="4.500" y=".5" width="11" height="9" fill="#c0c0c0" stroke="#202020"/><rect class="px" x="6" y="2" width="8" height="6" fill="#2040d0"/><rect class="px" x="8" y="3" width="4" height="3" fill="#80c0ff"/><rect class="px" x=".5" y="8.500" width="12" height="8" fill="#fff" stroke="#202020"/><path d="M2 15l3-4l2 2l2-3l3 5z" fill="#d02020"/><rect class="px" x="13.500" y="11.500" width="4" height="5" fill="#e0e0e0" stroke="#202020"/></svg>
<svg style="left:879px;top:747px" width="14" height="16" viewBox="0 0 18 18" preserveAspectRatio="none"><rect class="px" x=".5" y="1.500" width="14" height="11" fill="#c0c0c0" stroke="#101010"/><rect class="px" x="2" y="3" width="11" height="8" fill="#1830c0"/><path d="M3 9l3-4l2 2l3-3" stroke="#30c030" fill="none" stroke-width="1.500"/><path class="px" d="M4 14h8v2h-8z" fill="#808080" stroke="#101010"/><path d="M7 12l8-10l2 1.500l-8 10z" fill="#e8c020" stroke="#604000" stroke-width=".8"/><path d="M15 2l2 1.500" stroke="#d02020" stroke-width="2"/></svg>
<svg style="left:894px;top:748px" width="14" height="15" viewBox="0 0 14 15"><path d="M1 10c2-3 3-7 6-7c2 0 2 3 1 5c2 0 5 1 5 3s-3 3-6 3s-6-1-6-4z" fill="#f8f8f8" stroke="#202020"/><circle cx="5" cy="10" r="1.300" fill="#202020"/></svg>
<svg style="left:906px;top:747px" width="7" height="16" viewBox="0 0 7 16"><circle cx="3.500" cy="2.500" r="2" fill="#d02020"/><rect class="px" x="2" y="6" width="3" height="9" fill="#10a0a0"/></svg>
<svg style="left:911px;top:747px" width="18" height="16" viewBox="0 0 18 16"><path d="M1 5.500h3.500l5-4.500v14l-5-4.500h-3.500z" fill="#e8d020" stroke="#202020"/><path d="M12 4l4-2M12 8h5M12 12l4 2" stroke="#808080"/></svg>
<svg style="left:929px;top:748px" width="17" height="14" viewBox="0 0 17 14"><path d="M4 0h9q4 0 4 4v10h-13l-4-4q0-10 4-10z" fill="#e01010"/><text x="8.800" y="11.500" text-anchor="middle" font-family="Liberation Sans,sans-serif" font-weight="bold" font-style="italic" font-size="10.500" letter-spacing="-.6" fill="#fff">ATi</text></svg>
<svg style="left:945px;top:747px" width="17" height="17" viewBox="0 0 18 18"><circle cx="9" cy="9" r="8" fill="#209030" stroke="#104018"/><path d="M6 14v-6l-1.500 2M6 8l1.500 2M12 14v-8l-2 3M12 6l2 3M9 14v-4" stroke="#f0f0f0" stroke-width="1.600" fill="none"/><path d="M3 14h12" stroke="#f0f0f0"/></svg>
<svg style="left:964px;top:747px" width="16" height="16" viewBox="0 0 16 16"><rect class="px" x=".5" y=".5" width="8" height="6" fill="#c0c0c0" stroke="#101010"/><rect class="px" x="2" y="2" width="5" height="3" fill="#20a030"/><rect class="px" x="5.500" y="6.500" width="8" height="6" fill="#c0c0c0" stroke="#101010"/><rect class="px" x="7" y="8" width="5" height="3" fill="#20a030"/><path class="px" d="M4 14.500h11" stroke="#101010"/></svg>
</body></html>
